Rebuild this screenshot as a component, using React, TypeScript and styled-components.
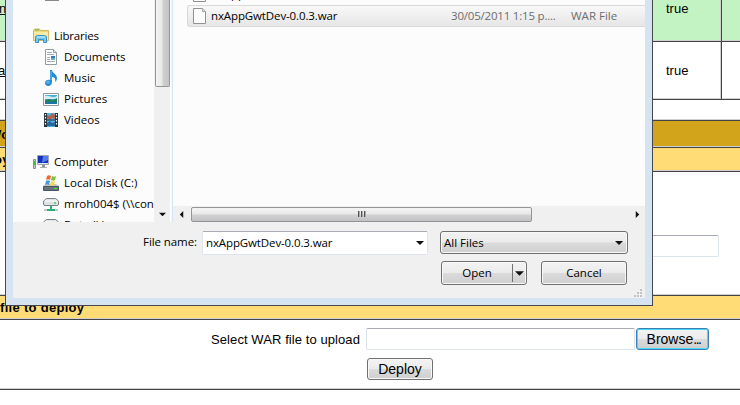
import React from "react";
import styled, { createGlobalStyle, css } from "styled-components";

const GlobalStyle = createGlobalStyle`
  * { box-sizing: border-box; }
  html, body { margin: 0; padding: 0; background: #fff; overflow: hidden; }
`;

const Page = styled.main`
  position: relative;
  width: 740px;
  height: 405px;
  overflow: hidden;
  color: #000;
  font: 13px/16px "Liberation Sans", Arial, sans-serif;
  white-space: nowrap;
`;

const ruled = css`
  border-bottom: 1px solid #444;
  box-shadow: inset 0 -1px #d0d0d0;
`;

const TableRow = styled.div<{ $height: number; $tint?: string }>`
  ${ruled}
  display: grid;
  grid-template-columns: 653px 69px 1fr;
  height: ${(p) => p.$height}px;
  background: ${(p) => p.$tint ?? "#fff"};
`;

const Cell = styled.div<{ $top: number; $shift?: number; $divided?: boolean }>`
  padding-top: ${(p) => p.$top}px;
  text-indent: ${(p) => p.$shift ?? 13}px;
  ${(p) =>
    p.$divided &&
    css`
      border-right: 1px solid #444;
      box-shadow: inset -1px 0 #d0d0d0, inset 0 -1px #d0d0d0;
    `}
`;

const LinkText = styled.span`
  text-decoration: underline;
`;

const Gap = styled.div<{ $height: number }>`
  ${ruled}
  height: ${(p) => p.$height}px;
`;

const Heading = styled.div<{ $height: number; $tone: string; $shift: number; $top: number }>`
  ${ruled}
  height: ${(p) => p.$height}px;
  padding-top: ${(p) => p.$top}px;
  text-indent: ${(p) => p.$shift}px;
  background: ${(p) => p.$tone};
  font-weight: bold;
  letter-spacing: 0.3px;
`;

const ConfigPanel = styled.div`
  ${ruled}
  display: flex;
  justify-content: flex-end;
  height: 124px;
  padding: 63px 21px 0 0;
`;

const Field = styled.div<{ $width: number }>`
  width: ${(p) => p.$width}px;
  height: 22px;
  border: 1px solid #dde3ec;
  border-top-color: #a9abb2;
  border-radius: 2px;
  background: #fff;
`;

const UploadPanel = styled.form`
  ${ruled}
  display: grid;
  grid-template-columns: 360px 269px 73px;
  grid-template-rows: 22px 22px;
  column-gap: 1px;
  row-gap: 8px;
  height: 70px;
  padding-top: 8px;
  justify-content: start;
  margin: 0;
`;

const UploadLabel = styled.label`
  padding-top: 4px;
  text-align: right;
  letter-spacing: 0.08px;
`;

const UploadField = styled(Field)`
  margin-left: 5px;
`;

const buttonFace = css`
  border: 1px solid #707070;
  border-radius: 3px;
  background: linear-gradient(#f3f3f3 0%, #ebebeb 49%, #dbdbdb 51%, #cfcfcf 100%);
  box-shadow: inset 0 0 0 1px #f8f8f8;
  color: #000;
`;

const FormButton = styled.button<{ $focus?: boolean }>`
  ${buttonFace}
  width: ${(p) => (p.$focus ? 73 : 66)}px;
  height: 22px;
  margin-left: ${(p) => (p.$focus ? 5 : 6)}px;
  padding: 0;
  font: 14px/18px "Liberation Sans", Arial, sans-serif;
  ${(p) =>
    p.$focus &&
    css`
      padding-left: 2px;
      border-color: #3c7fb1;
      box-shadow: inset 0 0 0 1px #48d8fb;
    `}
`;

const Dots = styled.span`
  letter-spacing: -1.5px;
`;

const DeploySlot = styled.div`
  grid-column: 2;
`;

const Dialog = styled.section`
  position: absolute;
  z-index: 1;
  top: 0;
  left: 5px;
  width: 648px;
  height: 306px;
  padding: 0 7px 7px;
  border: 1px solid #45474d;
  border-top: 0;
  background: #d6e3f1;
  font: 11.5px/16px "Open Sans", "Noto Sans", sans-serif;
`;

const DialogBody = styled.div`
  height: 298px;
  background: #f0f0f0;
`;

const Browser = styled.div`
  display: grid;
  grid-template-columns: 141px 16px 3px 472px;
  height: 222px;
  background: #fcfcfc;
`;

const Tree = styled.nav`
  display: flex;
  flex-direction: column;
  overflow: hidden;
  height: 222px;
`;

const ScrolledEdge = styled.div`
  flex: none;
  height: 25px;
  padding-left: 32px;
  svg { display: block; }
`;

const TreeItem = styled.div<{ $child?: boolean; $space?: number }>`
  display: flex;
  flex: none;
  align-items: center;
  gap: 5px;
  height: 21px;
  margin-top: ${(p) => p.$space ?? 0}px;
  padding-left: ${(p) => (p.$child ? 30 : 20)}px;
  svg { flex: none; }
`;

const Text = styled.span<{ $track?: number; $muted?: boolean }>`
  letter-spacing: ${(p) => p.$track ?? 0}px;
  color: ${(p) => (p.$muted ? "#6d6d6d" : "#000")};
`;

const VerticalBar = styled.div`
  display: flex;
  flex-direction: column;
  justify-content: space-between;
  align-items: center;
  height: 222px;
  background: #f0f0f0;
`;

const VerticalThumb = styled.div`
  width: 15px;
  height: 87px;
  border: 1px solid #959595;
  border-top: 0;
  border-radius: 0 0 2px 2px;
  background: linear-gradient(90deg, #f4f4f4, #e8e8e8 48%, #d0d0d3 52%, #c4c4c8);
`;

const ArrowSlot = styled.div`
  display: flex;
  align-items: center;
  justify-content: center;
  width: 16px;
  height: 16px;
`;

const Splitter = styled.div`
  border-left: 1px solid #fff;
  border-right: 1px solid #d6e5f5;
  background: #f4f7fb;
`;

const Files = styled.div`
  display: flex;
  flex-direction: column;
  height: 222px;
`;

const FileArea = styled.div`
  height: 206px;
  padding-left: 14px;
  overflow: hidden;
`;

const PartialFile = styled.div`
  height: 5px;
  overflow: hidden;
  padding: 0 0 3px 6px;
  display: flex;
  align-items: flex-end;
  gap: 4px;
`;

const FileRow = styled.div`
  display: grid;
  grid-template-columns: 14px 244px 120px 1fr;
  align-items: center;
  height: 22px;
  padding-left: 5px;
  border: 1px solid #d9d9d9;
  border-right: 0;
  border-radius: 3px 0 0 3px;
  background: linear-gradient(#f8f8f8, #e6e6e6);
`;

const FileName = styled(Text)`
  padding-left: 4px;
`;

const HorizontalBar = styled.div`
  display: grid;
  grid-template-columns: 18px 341px 1fr 16px;
  align-items: center;
  height: 16px;
  background: #f0f0f0;
`;

const HorizontalThumb = styled.div`
  display: flex;
  align-items: center;
  justify-content: center;
  gap: 1px;
  height: 15px;
  border: 1px solid #959595;
  border-radius: 2px;
  background: linear-gradient(#f4f4f4, #e8e8e8 48%, #d2d2d4 52%, #c2c2c6);
`;

const Grip = styled.i`
  width: 2px;
  height: 6px;
  border-left: 1px solid #555;
  background: #aaa;
`;

const Footer = styled.div`
  display: grid;
  grid-template-columns: 184px 226px 188px;
  grid-template-rows: 23px 24px;
  column-gap: 6px;
  row-gap: 7px;
  padding-top: 9px;
`;

const FileLabel = styled.label`
  padding-top: 3px;
  text-align: right;
`;

const Combo = styled.div`
  display: flex;
  align-items: center;
  justify-content: space-between;
  width: 226px;
  height: 24px;
  margin-left: -1px;
  padding: 0 3px;
  border: 1px solid #e0e4ec;
  border-top-color: #a9abb2;
  border-radius: 2px;
  background: #fff;
`;

const Filter = styled.div`
  ${buttonFace}
  display: flex;
  align-items: center;
  justify-content: space-between;
  width: 188px;
  height: 23px;
  margin-left: 5px;
  padding: 0 4px 0 3px;
`;

const Actions = styled.div`
  grid-column: 3;
  display: flex;
  gap: 14px;
  padding-left: 6px;
`;

const ActionButton = styled.button`
  ${buttonFace}
  display: flex;
  flex: none;
  align-items: center;
  justify-content: center;
  width: 86px;
  height: 24px;
  padding: 0;
  font: inherit;
`;

const ActionText = styled(Text)`
  flex: 1;
  text-align: center;
`;

const SplitArrow = styled.span`
  display: flex;
  align-items: center;
  justify-content: center;
  width: 14px;
  height: 18px;
  border-left: 1px solid #707070;
`;

const ResizeGrip = styled.div`
  display: flex;
  justify-content: flex-end;
  padding: 4px 3px 0 0;
`;

type Direction = "down" | "left" | "right";
const Arrow = ({ to = "down", size = 7 }: { to?: Direction; size?: number }) => (
  <svg width={size} height={size} viewBox="0 0 8 8">
    <path d={{ down: "M0 2h8L4 6z", left: "M6 0v8L2 4z", right: "M2 0v8l4-4z" }[to]} fill="#111" />
  </svg>
);

const FolderIcon = () => (
  <svg width="16" height="16" viewBox="0 0 16 16">
    <path d="M.5 2.5 1.5 1h5l1 1.5h8v10H.5z" fill="#efd77b" stroke="#d3b75f" />
    <path d="M2 2h4" stroke="#55b94a" /><path d="M1 4h14v8H1z" fill="#fae9a2" />
    <path d="M2.5 14.5V8.5l2-1h7l2 1v6h-3v-3h-5v3z" fill="#77c7ec" stroke="#3694cb" />
    <path d="M4 9h8" stroke="#cceffb" />
  </svg>
);
const DocumentIcon = () => (
  <svg width="16" height="16" viewBox="0 0 16 16">
    <path d="M2.5.5h8l3 3v12h-11z" fill="#fff" stroke="#929ba1" /><path d="M10.5.5v3h3" fill="#d9e4ec" stroke="#929ba1" />
    <path d="M4 3.5h5M4 5.5h7M4 8.5h3M4 10.5h3M4 12.5h8" stroke="#9eabb6" /><path d="M8 7h4v4H8z" fill="#3478b6" />
    <path d="M8 9h4v2H8z" fill="#65b5bd" />
  </svg>
);
const MusicIcon = () => (
  <svg width="16" height="16" viewBox="0 0 16 16">
    <path d="M7 0h2c0 3 5 4 5 8 0 2-1 3-2 4 1-4-1-5-3-5v5c0 5-7 5-7 1 0-3 3-4 5-3z" fill="#278bd0" />
    <path d="M8 1v9" stroke="#67bff0" /><ellipse cx="5" cy="12" rx="2" ry="1.5" fill="#56b4eb" />
  </svg>
);
const PictureIcon = () => (
  <svg width="16" height="16" viewBox="0 0 16 16">
    <path d="M.5 2.5h15v12H.5z" fill="#fff" stroke="#8e999f" /><path d="M2 4h12v9H2z" fill="#47acd8" />
    <path d="M2 5c5-1 7 3 12 0v3H2z" fill="#d0f0f6" /><path d="m2 9 4-1 4 1 4-2v4H2z" fill="#24815d" />
    <path d="M2 11h12v2H2z" fill="#1b75aa" />
  </svg>
);
const VideoIcon = () => (
  <svg width="16" height="16" viewBox="0 0 16 16">
    <path d="M1 1h14v14H1z" fill="#28323a" /><path d="M4 1h8v14H4z" fill="#52b1df" />
    <path d="m4 3 3 1 2-3 3 2v4L9 6 7 8 4 6z" fill="#ad624f" /><path d="m4 11 3-2 2 2 3-1v4H4z" fill="#27679f" />
    <path d="M4 8h8" stroke="#222f3b" /><path d="M2.5 2v12M13.5 2v12" stroke="#fff" strokeWidth="1.2" strokeDasharray="1.5 1.5" />
  </svg>
);
const ComputerIcon = () => (
  <svg width="16" height="16" viewBox="0 0 16 16">
    <path d="M.5 5.5h2v9h-2z" fill="#c7c9cc" stroke="#888d91" /><path d="M1 7h1v4H1z" fill="#41bf3a" />
    <path d="M4.5 1.5h11v9h-11z" fill="#dce4ec" stroke="#a0a7af" /><path d="M5 2h10v7H5z" fill="#1532bb" />
    <path d="M10 2h5v4l-6 3z" fill="#527cea" /><path d="M9 11h3v2H9z" fill="#8b9298" /><path d="M7 13.5h7" stroke="#a9afb3" />
  </svg>
);
const DiskIcon = () => (
  <svg width="16" height="16" viewBox="0 0 16 16">
    <path d="M3 9h10l3 2v4H0v-4z" fill="#c0c5ca" /><path d="M.5 11.5h15v4H.5z" fill="#66737d" stroke="#4b555c" />
    <path d="M11 13h3v1h-3z" fill="#58df4b" />
    <path d="M4 1q2-1.5 4 0L7 5Q5 3.5 3 5z" fill="#ed6932" /><path d="M9 1q2 1.5 4 0l-1 4q-2 1.5-4 0z" fill="#79bd42" />
    <path d="M3 6q2-1.5 4 0l-1 4q-2-1.5-4 0z" fill="#4199df" /><path d="M8 6q2 1.5 4 0l-1 4q-2 1.5-4 0z" fill="#ffd24d" />
  </svg>
);
const NetworkIcon = () => (
  <svg width="16" height="16" viewBox="0 0 16 16">
    <path d="m.5 5 3-2.5h9l3 2.5v3q0 1.5-1.5 1.5H2Q.5 9.5.5 8z" fill="#dfe2e4" stroke="#7a8186" /><path d="M2 5h12" stroke="#fff" />
    <path d="M11 7h2" stroke="#44c759" strokeWidth="1.5" /><path d="M7 10h2v3h3v2H4v-2h3z" fill="#25b171" />
    <path d="M1 14h3M12 14h3" stroke="#8a9296" />
  </svg>
);
const FileIcon = () => (
  <svg width="14" height="16" viewBox="0 0 14 16">
    <path d="M.5.5h9l3 3v12H.5z" fill="#fcfcfc" stroke="#929292" /><path d="M9.5.5v3h3" fill="#ddd" stroke="#aaa" />
  </svg>
);

const libraries = [
  { name: "Documents", Icon: DocumentIcon },
  { name: "Music", Icon: MusicIcon },
  { name: "Pictures", Icon: PictureIcon },
  { name: "Videos", Icon: VideoIcon },
];
const drives = [
  { name: "Local Disk (C:)", Icon: DiskIcon },
  { name: "mroh004$ (\\\\con", Icon: NetworkIcon },
  { name: "Data (I:)", Icon: NetworkIcon },
];

const OpenDialog = () => (
  <Dialog>
    <DialogBody>
      <Browser>
        <Tree>
          <ScrolledEdge><svg width="14" height="1"><path d="M0 .5h14" stroke="#888" /></svg></ScrolledEdge>
          <TreeItem><FolderIcon /><Text $track={-0.2}>Libraries</Text></TreeItem>
          {libraries.map(({ name, Icon }) => <TreeItem $child key={name}><Icon /><Text>{name}</Text></TreeItem>)}
          <TreeItem $space={21}><ComputerIcon /><Text>Computer</Text></TreeItem>
          {drives.map(({ name, Icon }) => <TreeItem $child key={name}><Icon /><Text>{name}</Text></TreeItem>)}
        </Tree>
        <VerticalBar><VerticalThumb /><ArrowSlot><Arrow /></ArrowSlot></VerticalBar>
        <Splitter />
        <Files>
          <FileArea>
            <PartialFile><FileIcon /><Text $track={-0.12}>nxApp</Text></PartialFile>
            <FileRow>
              <FileIcon />
              <FileName $track={-0.12}>nxAppGwtDev-0.0.3.war</FileName>
              <Text $muted $track={-0.2}>30/05/2011 1:15 p....</Text>
              <Text $muted>WAR File</Text>
            </FileRow>
          </FileArea>
          <HorizontalBar>
            <ArrowSlot><Arrow to="left" /></ArrowSlot>
            <HorizontalThumb><Grip /><Grip /><Grip /></HorizontalThumb>
            <span />
            <ArrowSlot><Arrow to="right" /></ArrowSlot>
          </HorizontalBar>
        </Files>
      </Browser>
      <Footer>
        <FileLabel><Text $track={-0.08}>File name:</Text></FileLabel>
        <Combo><Text $track={-0.12}>nxAppGwtDev-0.0.3.war</Text><Arrow size={8} /></Combo>
        <Filter><Text>All Files</Text><Arrow size={8} /></Filter>
        <Actions>
          <ActionButton type="button"><ActionText>Open</ActionText><SplitArrow><Arrow size={9} /></SplitArrow></ActionButton>
          <ActionButton type="button"><Text>Cancel</Text></ActionButton>
        </Actions>
      </Footer>
      <ResizeGrip>
        <svg width="8" height="8"><path d="M6 0h2v2H6zM3 3h2v2H3zM6 3h2v2H6zM0 6h2v2H0zM3 6h2v2H3zM6 6h2v2H6z" fill="#c2c4c7" /></svg>
      </ResizeGrip>
    </DialogBody>
  </Dialog>
);

export default function App() {
  return (
    <>
      <GlobalStyle />
      <Page>
        <TableRow $height={42} $tint="#c3f3c3">
          <Cell $top={1} $shift={-1}><LinkText>n</LinkText></Cell>
          <Cell $top={1} $divided>true</Cell>
          <Cell $top={1} />
        </TableRow>
        <TableRow $height={58}>
          <Cell $top={21} $shift={-2}><LinkText>ac</LinkText></Cell>
          <Cell $top={21} $divided>true</Cell>
          <Cell $top={21} />
        </TableRow>
        <Gap $height={21} />
        <Heading $height={27} $tone="#d2a41c" $top={6} $shift={-11}>Wo</Heading>
        <Heading $height={24} $tone="#ffdc75" $top={4} $shift={-6}>oy</Heading>
        <ConfigPanel><Field $width={220} /></ConfigPanel>
        <Heading $height={24} $tone="#ffdc75" $top={4} $shift={0}>file to deploy</Heading>
        <UploadPanel>
          <UploadLabel>Select WAR file to upload</UploadLabel>
          <UploadField $width={269} />
          <FormButton type="button" $focus>Browse<Dots>...</Dots></FormButton>
          <DeploySlot><FormButton type="button">Deploy</FormButton></DeploySlot>
        </UploadPanel>
        <OpenDialog />
      </Page>
    </>
  );
}
